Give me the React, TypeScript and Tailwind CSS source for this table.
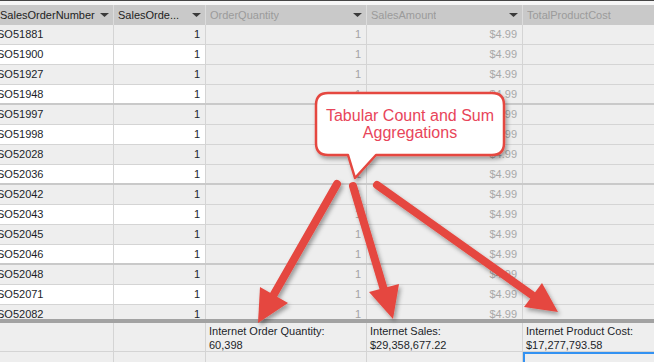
import React from 'react';

const rows = [
  'SO51881', 'SO51900', 'SO51927', 'SO51948', 'SO51997', 'SO51998', 'SO52028', 'SO52036',
  'SO52042', 'SO52043', 'SO52045', 'SO52046', 'SO52048', 'SO52071', 'SO52082',
];

const Caret = () => (
  <svg width="9" height="4" viewBox="0 0 9 4" className="shrink-0">
    <path d="M0 0H9L4.5 4Z" fill="#3a3a3a" />
  </svg>
);

const HeaderCell: React.FC<{ w: string; label: string; dim?: boolean; caret?: boolean; pl?: string }> = ({
  w, label, dim, caret = true, pl = 'pl-[4px]',
}) => (
  <div className={`${w} h-full flex items-center justify-between ${pl} pr-[4px] border-r border-[#dcdcdc] shrink-0`}>
    <span className={`whitespace-nowrap overflow-hidden ${dim ? 'text-[#9b9b9b]' : 'text-[#1e1e1e]'}`}>{label}</span>
    {caret && <Caret />}
  </div>
);

const App: React.FC = () => {
  return (
    <div className="relative w-[654px] h-[362px] overflow-hidden bg-[#eeeeee] font-['Liberation_Sans',Arial,sans-serif] text-[11px]">
      <div className="h-[1px] bg-[#454545]" />
      <div className="h-[4px] bg-[#f7f7f7]" />

      {/* header */}
      <div className="flex h-[20px] bg-[#c9c9c9]">
        <HeaderCell w="w-[114px]" label="SalesOrderNumber" pl="pl-0" />
        <HeaderCell w="w-[92px]" label="SalesOrde..." />
        <HeaderCell w="w-[161px]" label="OrderQuantity" dim />
        <HeaderCell w="w-[156px]" label="SalesAmount" dim />
        <HeaderCell w="w-[140px]" label="TotalProductCost" dim caret={false} />
      </div>

      {/* rows */}
      <div className="h-[294px] overflow-hidden">
        {rows.map((r, i) => {
          const bg = i % 2 === 1 ? 'bg-white' : 'bg-[#eeeeee]';
          const thick = i % 4 === 3;
          return (
            <div
              key={r}
              className={`flex h-[20px] ${thick ? 'border-b-2 border-[#c9c9c9]' : 'border-b border-[#d4d4d4]'}`}
            >
              <div className={`w-[114px] ${bg} border-r border-[#d4d4d4] flex items-center`}>
                <span className="-ml-[3px] text-[#1c1e2a]">{r}</span>
              </div>
              <div className={`w-[92px] ${bg} border-r border-[#d4d4d4] flex items-center justify-end pr-[5px] text-[#1c1e2a]`}>
                1
              </div>
              <div className="w-[161px] border-r border-[#d4d4d4] flex items-center justify-end pr-[5px] text-[#a3a3a3]">
                1
              </div>
              <div className="w-[156px] border-r border-[#d4d4d4] flex items-center justify-end pr-[5px] text-[#a8a8a8]">
                $4.99
              </div>
              <div className="flex-1" />
            </div>
          );
        })}
      </div>

      {/* measure grid */}
      <div className="h-[4px] bg-[#a2a2a2]" />
      <div className="flex h-[29px] border-b border-[#d4d4d4] leading-[14px] text-[#1c1e2a]">
        <div className="w-[114px] border-r border-[#d4d4d4]" />
        <div className="w-[92px] border-r border-[#d4d4d4]" />
        <div className="w-[161px] border-r border-[#d4d4d4] pl-[3px] pt-[1px]">
          <div>Internet Order Quantity:</div>
          <div>60,398</div>
        </div>
        <div className="w-[156px] border-r border-[#d4d4d4] pl-[3px] pt-[1px]">
          <div>Internet Sales:</div>
          <div>$29,358,677.22</div>
        </div>
        <div className="flex-1 pl-[3px] pt-[1px]">
          <div>Internet Product Cost:</div>
          <div>$17,277,793.58</div>
        </div>
      </div>
      <div className="flex h-[10px]">
        <div className="w-[114px] border-r border-[#d4d4d4]" />
        <div className="w-[92px] border-r border-[#d4d4d4]" />
        <div className="w-[161px] border-r border-[#d4d4d4]" />
        <div className="w-[156px] border-r border-[#d4d4d4]" />
        <div className="flex-1 border-t-2 border-l-2 border-[#3392f2]" />
      </div>

      {/* annotation overlay */}
      <svg className="absolute inset-0 pointer-events-none" width="654" height="362" viewBox="0 0 654 362">
        <defs>
          <filter id="sh" x="-20%" y="-20%" width="140%" height="140%">
            <feDropShadow dx="2" dy="3" stdDeviation="2" floodColor="#000" floodOpacity="0.35" />
          </filter>
        </defs>
        <g filter="url(#sh)">
          <path
            d="M328 93H492Q504 93 504 105V143Q504 155 492 155H376L355 178L348 155H328Q316 155 316 143V105Q316 93 328 93Z"
            fill="#fff"
            stroke="#e5473f"
            strokeWidth="2.5"
            strokeLinejoin="round"
          />
        </g>
        <g filter="url(#sh)" fill="#e5473f" stroke="#e5473f">
          <line x1="337" y1="184" x2="273" y2="296" strokeWidth="8" strokeLinecap="round" />
          <polygon points="258,323 288,303 260,287" stroke="none" />
          <line x1="353" y1="186" x2="384" y2="290" strokeWidth="8" strokeLinecap="round" />
          <polygon points="393,319 399,284 369,292" stroke="none" />
          <line x1="377" y1="185" x2="532" y2="295" strokeWidth="8" strokeLinecap="round" />
          <polygon points="558,312 542,283 524,307" stroke="none" />
        </g>
      </svg>

      <div className="absolute left-[316px] top-[93px] w-[188px] h-[62px] flex flex-col items-center justify-center text-center font-['Liberation_Sans',Arial,sans-serif] text-[16px] leading-[17px] text-[#e8455a]">
        <div>Tabular Count and Sum</div>
        <div>Aggregations</div>
      </div>
    </div>
  );
};

export default App;
